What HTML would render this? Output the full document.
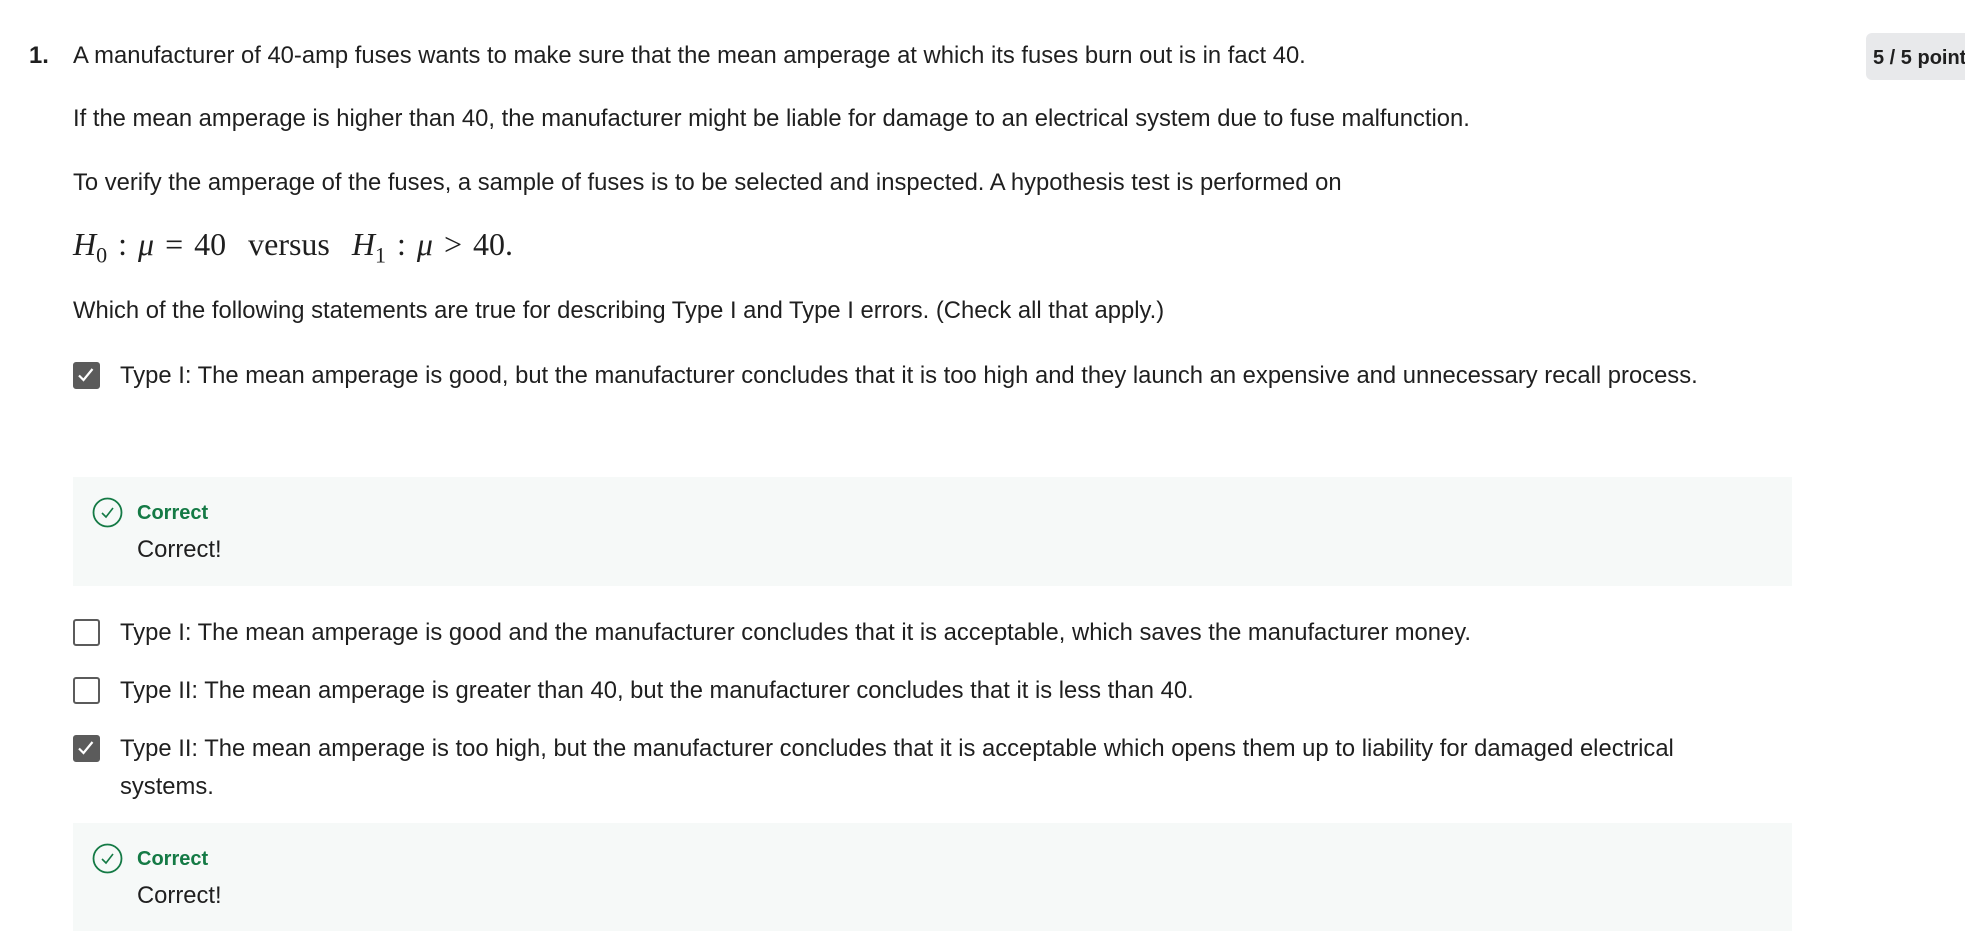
<!DOCTYPE html>
<html><head><meta charset="utf-8"><style>
body{margin:0;width:1965px;height:942px;overflow:hidden;background:#fff;font-family:"Liberation Sans",sans-serif;color:#1f1f1f;font-size:23.8px;position:relative}
.a{position:absolute;white-space:nowrap;line-height:30px}
.cb{position:absolute;left:73px;width:27px;height:27px;border:2.5px solid #5b5b5b;border-radius:3px;box-sizing:border-box;background:#fff}
.cb.on{background:#5b5b5b}
.fb{position:absolute;left:73px;width:1719px;background:#f6f9f8}
.math{font-family:"Liberation Serif",serif;font-size:32px;word-spacing:3px}
.g{color:#147a45;font-weight:bold;font-size:20px}
</style></head><body>
<div class="a" style="left:29px;top:41px;font-weight:bold">1.</div>
<div class="a" style="left:73px;top:41px">A manufacturer of 40-amp fuses wants to make sure that the mean amperage at which its fuses burn out is in fact 40.</div>
<div class="a" style="left:73px;top:104px">If the mean amperage is higher than 40, the manufacturer might be liable for damage to an electrical system due to fuse malfunction.</div>
<div class="a" style="left:73px;top:168px">To verify the amperage of the fuses, a sample of fuses is to be selected and inspected. A hypothesis test is performed on</div>
<div class="a math" style="left:73px;top:229px"><i>H</i><sub style="font-size:22px">0</sub> : <i>μ</i> = 40 &nbsp;versus &nbsp;<i>H</i><sub style="font-size:22px">1</sub> : <i>μ</i> &gt; 40.</div>
<div class="a" style="left:73px;top:296px">Which of the following statements are true for describing Type I and Type I errors. (Check all that apply.)</div>
<div class="cb on" style="top:362px"><svg width="22" height="22" viewBox="0 0 22 22" style="position:absolute;left:0;top:0"><path d="M4 11.5l4.5 4.5 9-11" stroke="#fff" stroke-width="2.2" fill="none"/></svg></div>
<div class="a" style="left:120px;top:361px">Type I: The mean amperage is good, but the manufacturer concludes that it is too high and they launch an expensive and unnecessary recall process.</div>
<div class="fb" style="top:477px;height:109px"></div>
<svg style="position:absolute;left:92px;top:497px" width="31" height="31"><circle cx="15.5" cy="15.5" r="14" fill="none" stroke="#147a45" stroke-width="1.8"/><path d="M10 16l4 4 7-9" stroke="#147a45" stroke-width="1.6" fill="none"/></svg>
<div class="a g" style="left:137px;top:498px">Correct</div>
<div class="a" style="left:137px;top:535px">Correct!</div>
<div class="cb" style="top:619px"></div>
<div class="a" style="left:120px;top:618px">Type I: The mean amperage is good and the manufacturer concludes that it is acceptable, which saves the manufacturer money.</div>
<div class="cb" style="top:677px"></div>
<div class="a" style="left:120px;top:676px">Type II: The mean amperage is greater than 40, but the manufacturer concludes that it is less than 40.</div>
<div class="cb on" style="top:735px"><svg width="22" height="22" viewBox="0 0 22 22" style="position:absolute;left:0;top:0"><path d="M4 11.5l4.5 4.5 9-11" stroke="#fff" stroke-width="2.2" fill="none"/></svg></div>
<div class="a" style="left:120px;top:734px">Type II: The mean amperage is too high, but the manufacturer concludes that it is acceptable which opens them up to liability for damaged electrical</div>
<div class="a" style="left:120px;top:772px">systems.</div>
<div class="fb" style="top:823px;height:108px"></div>
<svg style="position:absolute;left:92px;top:843px" width="31" height="31"><circle cx="15.5" cy="15.5" r="14" fill="none" stroke="#147a45" stroke-width="1.8"/><path d="M10 16l4 4 7-9" stroke="#147a45" stroke-width="1.6" fill="none"/></svg>
<div class="a g" style="left:137px;top:844px">Correct</div>
<div class="a" style="left:137px;top:881px">Correct!</div>
<div style="position:absolute;left:1866px;top:33px;width:120px;height:47px;background:#e8e9eb;border-radius:6px"></div>
<div class="a" style="left:1873px;top:43px;font-weight:bold;font-size:20px">5 / 5 points</div>
</body></html>
